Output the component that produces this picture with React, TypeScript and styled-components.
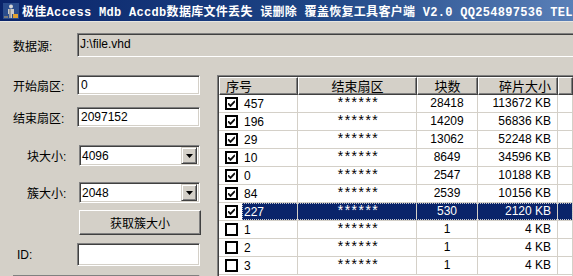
import styled, { createGlobalStyle } from 'styled-components';

const GlobalStyle = createGlobalStyle`
  html, body {
    margin: 0;
    padding: 0;
    background: #d4d0c8;
    overflow: hidden;
  }
  body {
    font-family: 'Liberation Sans', 'Noto Sans CJK SC', sans-serif;
    font-size: 12px;
    color: #000;
  }
`;

const rows = [
  { id: '457', blocks: '28418', size: '113672 KB', checked: true },
  { id: '196', blocks: '14209', size: '56836 KB', checked: true },
  { id: '29', blocks: '13062', size: '52248 KB', checked: true },
  { id: '10', blocks: '8649', size: '34596 KB', checked: true },
  { id: '0', blocks: '2547', size: '10188 KB', checked: true },
  { id: '84', blocks: '2539', size: '10156 KB', checked: true },
  { id: '227', blocks: '530', size: '2120 KB', checked: true, selected: true },
  { id: '1', blocks: '1', size: '4 KB', checked: false },
  { id: '2', blocks: '1', size: '4 KB', checked: false },
  { id: '3', blocks: '1', size: '4 KB', checked: false },
];

const AppIcon = () => (
  <svg width="16" height="16" viewBox="0 0 16 16">
    <rect x="0" y="0" width="16" height="16" fill="#2a4c8c" />
    <circle cx="8" cy="3.5" r="2" fill="#d8d8d8" />
    <path d="M5 6h6v5H9v4H7v-4H5z" fill="#c8c8c8" />
    <path d="M6 6h2v9H6z" fill="#9a9a9a" />
    <rect x="10" y="11" width="5" height="4" fill="#e0a030" />
    <rect x="1" y="13" width="4" height="2" fill="#7a7a7a" />
  </svg>
);

const CheckBox = ({ checked }: { checked: boolean }) => (
  <svg width="13" height="13" viewBox="0 0 13 13">
    <rect x="1" y="1" width="11" height="11" fill="#fff" stroke="#000" strokeWidth="2" />
    {checked && <path d="M3.5 6l2 2 4-4.2v1.8l-4 4.2-2-2z" fill="#000" stroke="#000" strokeWidth="0.8" />}
  </svg>
);

const ArrowIcon = () => (
  <svg width="7" height="4" viewBox="0 0 7 4">
    <path d="M0 0h7L3.5 4z" fill="#000" />
  </svg>
);

const App = () => {
  return (
    <Window>
      <GlobalStyle />
      <TitleBar>
        <AppIcon />
        <TitleText>极佳Access Mdb Accdb数据库文件丢失 误删除 覆盖恢复工具客户端 V2.0 QQ254897536 TEL</TitleText>
      </TitleBar>

      <SourceRow>
        <SourceLabel>数据源:</SourceLabel>
        <SourceBox>J:\file.vhd</SourceBox>
      </SourceRow>

      <Main>
        <Form>
          <Field $top={0}>
            <Label $left={13}>开始扇区:</Label>
            <TextBox $h={20}>0</TextBox>
          </Field>
          <Field $top={12}>
            <Label $left={13}>结束扇区:</Label>
            <TextBox $h={20}>2097152</TextBox>
          </Field>
          <Field $top={18}>
            <Label $left={27}>块大小:</Label>
            <Select>
              <span>4096</span>
              <DropButton>
                <ArrowIcon />
              </DropButton>
            </Select>
          </Field>
          <Field $top={16}>
            <Label $left={27}>簇大小:</Label>
            <Select>
              <span>2048</span>
              <DropButton>
                <ArrowIcon />
              </DropButton>
            </Select>
          </Field>
          <Field $top={7}>
            <Label $left={13} />
            <Button>获取簇大小</Button>
          </Field>
          <Field $top={8}>
            <Label $left={17}>ID:</Label>
            <TextBox $h={23} />
          </Field>
          <BottomBox />
        </Form>

        <List>
          <HeaderRow>
            <HeaderCell $align="left">序号</HeaderCell>
            <HeaderCell $align="center">结束扇区</HeaderCell>
            <HeaderCell $align="center">块数</HeaderCell>
            <HeaderCell $align="right">碎片大小</HeaderCell>
            <HeaderCell $align="left" />
          </HeaderRow>
          {rows.map((r) => (
            <Row key={r.id}>
              <FirstCell>
                <CheckBox checked={r.checked} />
                <IdText $selected={!!r.selected}>{r.id}</IdText>
              </FirstCell>
              <Cell $align="center" $selected={!!r.selected}>
                <Stars>******</Stars>
              </Cell>
              <Cell $align="center" $selected={!!r.selected}>
                {r.blocks}
              </Cell>
              <Cell $align="right" $selected={!!r.selected}>
                {r.size}
              </Cell>
              <Cell $align="left" $selected={!!r.selected} />
              {r.selected && <FocusRect />}
            </Row>
          ))}
        </List>
      </Main>
    </Window>
  );
};

export default App;

const Window = styled.div`
  width: 573px;
  height: 276px;
  background: #d4d0c8;
  overflow: hidden;
`;

const TitleBar = styled.div`
  height: 21px;
  display: flex;
  align-items: center;
  gap: 3px;
  padding-left: 3px;
  background: linear-gradient(to right, #0a246a 0%, #1e4585 55%, #5a80b8 100%);
  border-bottom: 1px solid #e8e6e0;
  white-space: nowrap;
  overflow: hidden;
`;

const TitleText = styled.span`
  color: #fff;
  font-family: 'Liberation Mono', 'Noto Sans CJK SC', monospace;
  font-weight: bold;
  font-size: 12px;
  letter-spacing: 0.3px;
`;

const SourceRow = styled.div`
  display: flex;
  align-items: center;
  margin-top: 11px;
  height: 24px;
`;

const SourceLabel = styled.span`
  width: 64px;
  padding-left: 13px;
`;

const SourceBox = styled.div`
  flex: 1;
  height: 24px;
  box-sizing: border-box;
  padding: 3px 0 0 2px;
  background: #d4d0c8;
  border: 1px solid;
  border-color: #808080 #fff #fff #808080;
  box-shadow: inset 1px 1px #404040, inset -1px -1px #d4d0c8;
  margin-right: -10px;
`;

const Main = styled.div`
  display: flex;
  margin-top: 18px;
`;

const Form = styled.div`
  width: 217px;
  flex-shrink: 0;
  display: flex;
  flex-direction: column;
`;

const Field = styled.div<{ $top: number }>`
  display: flex;
  align-items: center;
  margin-top: ${(p) => p.$top}px;
`;

const Label = styled.span<{ $left: number }>`
  width: 77px;
  box-sizing: border-box;
  padding-left: ${(p) => p.$left}px;
  flex-shrink: 0;
`;

const sunken = `
  border: 1px solid;
  border-color: #808080 #fff #fff #808080;
  box-shadow: inset 1px 1px #404040, inset -1px -1px #d4d0c8;
`;

const TextBox = styled.div<{ $h: number }>`
  width: 123px;
  height: ${(p) => p.$h}px;
  box-sizing: border-box;
  background: #fff;
  padding: 2px 0 0 3px;
  ${sunken}
`;

const Select = styled.div`
  width: 121px;
  height: 21px;
  margin-left: 2px;
  box-sizing: border-box;
  background: #fff;
  display: flex;
  align-items: center;
  justify-content: space-between;
  padding: 0 2px 0 2px;
  ${sunken}
`;

const DropButton = styled.div`
  width: 16px;
  height: 17px;
  box-sizing: border-box;
  background: #d4d0c8;
  display: flex;
  align-items: center;
  justify-content: center;
  border: 1px solid;
  border-color: #d4d0c8 #404040 #404040 #d4d0c8;
  box-shadow: inset 1px 1px #fff, inset -1px -1px #808080;
`;

const Button = styled.div`
  width: 122px;
  height: 25px;
  margin-left: 2px;
  box-sizing: border-box;
  display: flex;
  align-items: center;
  justify-content: center;
  background: #d4d0c8;
  border: 1px solid;
  border-color: #fff #404040 #404040 #fff;
  box-shadow: inset -1px -1px #808080;
`;

const BottomBox = styled.div`
  margin: 9px 17px 0 13px;
  height: 20px;
  background: #fff;
  ${sunken}
`;

const List = styled.div`
  flex: 1;
  height: 210px;
  background: #fff;
  ${sunken}
  border-right: none;
  border-bottom: none;
  overflow: hidden;
`;

const columns = '79px 119px 61px 80px 1fr';

const HeaderRow = styled.div`
  display: grid;
  grid-template-columns: ${columns};
  height: 18px;
  margin: 1px 0 0 1px;
`;

const HeaderCell = styled.div<{ $align: 'left' | 'center' | 'right' }>`
  background: #d4d0c8;
  box-sizing: border-box;
  text-align: ${(p) => p.$align};
  padding: 1px 6px 0 6px;
  line-height: 15px;
  font-size: 13px;
  border: 1px solid;
  border-color: #fff #404040 #404040 #fff;
  box-shadow: inset -1px -1px #808080;
`;

const Row = styled.div`
  position: relative;
  display: grid;
  grid-template-columns: ${columns};
  height: 18px;
  margin-left: 1px;
`;

const FirstCell = styled.div`
  display: flex;
  align-items: center;
  gap: 4px;
  padding-left: 6px;
  border-right: 1px solid #d4d0c8;
  border-bottom: 1px solid #d4d0c8;
`;

const IdText = styled.span<{ $selected: boolean }>`
  flex: 1;
  align-self: stretch;
  display: flex;
  align-items: center;
  padding-left: 2px;
  background: ${(p) => (p.$selected ? '#0a246a' : 'transparent')};
  color: ${(p) => (p.$selected ? '#fff' : '#000')};
`;

const Cell = styled.div<{ $align: 'left' | 'center' | 'right'; $selected: boolean }>`
  box-sizing: border-box;
  text-align: ${(p) => p.$align};
  line-height: 17px;
  padding: 0 6px;
  white-space: nowrap;
  border-right: 1px solid #d4d0c8;
  border-bottom: 1px solid #d4d0c8;
  background: ${(p) => (p.$selected ? '#0a246a' : '#fff')};
  color: ${(p) => (p.$selected ? '#fff' : '#000')};
`;

const Stars = styled.span`
  font-family: 'Liberation Mono', monospace;
  font-size: 14px;
  letter-spacing: -1.5px;
  position: relative;
  top: 1px;
`;

const FocusRect = styled.div`
  position: absolute;
  left: 23px;
  right: 0;
  top: 0;
  bottom: 1px;
  border: 1px dotted #c8c8c8;
  pointer-events: none;
`;
